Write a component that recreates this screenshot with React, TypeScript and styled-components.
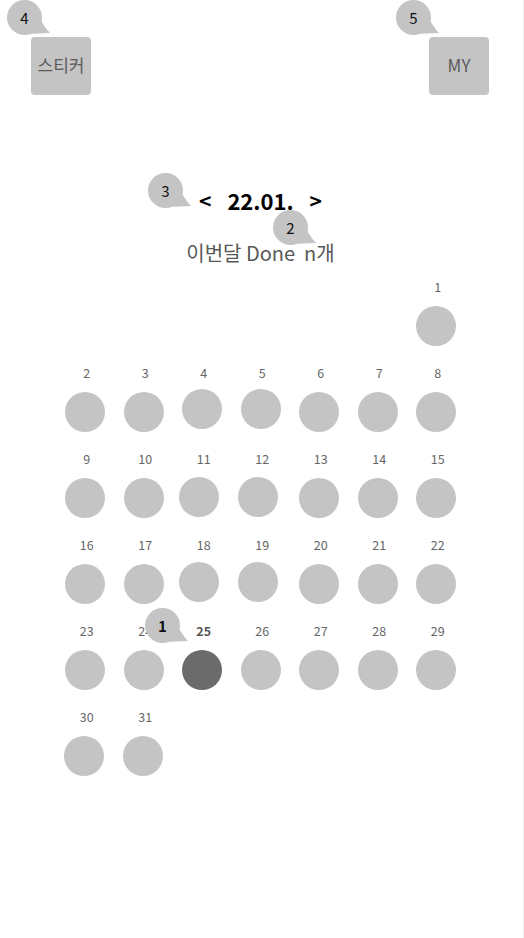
import styled, { createGlobalStyle } from "styled-components";

const GlobalStyle = createGlobalStyle`
    html, body {
        margin: 0;
        padding: 0;
        background: #fff;
    }
    body {
        font-family: "Noto Sans CJK KR", "Noto Sans", sans-serif;
    }
`;

type Day = { n: number; dx?: number; dy?: number };

// first of the month falls on the last column
const weeks: (Day | null)[][] = [
    [null, null, null, null, null, null, { n: 1 }],
    [{ n: 2 }, { n: 3 }, { n: 4, dy: -3 }, { n: 5, dy: -3 }, { n: 6 }, { n: 7 }, { n: 8 }],
    [{ n: 9 }, { n: 10 }, { n: 11, dx: -3, dy: -1 }, { n: 12, dx: -3, dy: -1 }, { n: 13 }, { n: 14 }, { n: 15 }],
    [{ n: 16 }, { n: 17 }, { n: 18, dx: -3, dy: -2 }, { n: 19, dx: -3, dy: -2 }, { n: 20 }, { n: 21 }, { n: 22 }],
    [{ n: 23 }, { n: 24 }, { n: 25 }, { n: 26 }, { n: 27 }, { n: 28 }, { n: 29 }],
    [{ n: 30, dx: -1 }, { n: 31, dx: -1 }],
];

const TODAY = 25;

const notes = [
    { label: "1", x: 145, y: 608, bold: true },
    { label: "2", x: 273, y: 210 },
    { label: "3", x: 148, y: 173 },
    { label: "4", x: 7, y: 0 },
    { label: "5", x: 396, y: 0 },
];

const Bubble = ({ label, x, y, bold }: { label: string; x: number; y: number; bold?: boolean }) => (
    <Note style={{ left: x, top: y }}>
        <svg width="52" height="38" viewBox="0 0 52 38">
            <circle cx="17.5" cy="17.5" r="17.5" fill="#c4c4c4" />
            <path d="M30 12 Q36 26 43 33 L18 34 Z" fill="#c4c4c4" />
        </svg>
        <NoteText $bold={bold}>{label}</NoteText>
    </Note>
);

const App = () => {
    return (
        <Page>
            <GlobalStyle />
            <Header>
                <SquareButton>스티커</SquareButton>
                <SquareButton>MY</SquareButton>
            </Header>

            <MonthNav>
                <Arrow>&lt;</Arrow>
                <Month>22.01.</Month>
                <Arrow>&gt;</Arrow>
            </MonthNav>
            <Summary>이번달 Done&nbsp; n개</Summary>

            <Calendar>
                {weeks.map((week, wi) =>
                    Array.from({ length: 7 }).map((_, di) => {
                        const d = week[di];
                        if (!d) return <Cell key={`${wi}-${di}`} />;
                        const today = d.n === TODAY;
                        return (
                            <Cell key={`${wi}-${di}`}>
                                <DayNum $today={today}>{d.n}</DayNum>
                                <Dot
                                    $today={today}
                                    style={{ transform: `translate(${d.dx ?? 0}px, ${d.dy ?? 0}px)` }}
                                />
                            </Cell>
                        );
                    })
                )}
            </Calendar>

            {notes.map((b) => (
                <Bubble key={b.label} {...b} />
            ))}
        </Page>
    );
};

export default App;


const Page = styled.div`
    position: relative;
    width: 524px;
    min-height: 938px;
    box-sizing: border-box;
    border-right: 1px solid #f2f2f2;
`;

const Header = styled.header`
    display: flex;
    justify-content: space-between;
    padding: 37px 34px 0 31px;
`;

const SquareButton = styled.button`
    width: 60px;
    height: 58px;
    border: none;
    border-radius: 4px;
    background-color: #c4c4c4;
    color: #5a5a5a;
    font-family: "Noto Sans CJK KR", "Noto Sans", sans-serif;
    font-size: 17px;
    padding: 0 0 3px;
    display: flex;
    align-items: center;
    justify-content: center;
`;

const MonthNav = styled.div`
    display: flex;
    justify-content: center;
    align-items: center;
    gap: 16px;
    margin-top: 90px;
    margin-right: 2px;
    height: 30px;
    font-family: "Noto Sans CJK KR", "Noto Sans", sans-serif;
    font-weight: 700;
    color: #000;
`;

const Arrow = styled.span`
    font-size: 21px;
    line-height: 30px;
`;

const Month = styled.span`
    font-size: 22px;
    line-height: 30px;
`;

const Summary = styled.div`
    margin-top: 24px;
    margin-right: 2px;
    height: 28px;
    line-height: 28px;
    text-align: center;
    font-size: 20px;
    color: #585858;
`;

const Calendar = styled.div`
    display: grid;
    grid-template-columns: repeat(7, 58.5px);
    row-gap: 18px;
    margin: 11px 0 0 56px;
`;

const Cell = styled.div`
    display: flex;
    flex-direction: column;
    align-items: center;
    gap: 10px;
    height: 68px;
`;

const DayNum = styled.span<{ $today?: boolean }>`
    height: 18px;
    line-height: 18px;
    padding-left: 3px;
    font-size: 12.5px;
    font-weight: ${(p) => (p.$today ? 700 : 400)};
    color: ${(p) => (p.$today ? "#555" : "#666")};
`;

const Dot = styled.div<{ $today?: boolean }>`
    width: 40px;
    height: 40px;
    border-radius: 50%;
    background-color: ${(p) => (p.$today ? "#6b6b6b" : "#c4c4c4")};
`;

const Note = styled.div`
    position: absolute;
    width: 52px;
    height: 38px;
    svg {
        display: block;
    }
`;

const NoteText = styled.span<{ $bold?: boolean }>`
    position: absolute;
    left: 0;
    top: 0;
    width: 35px;
    height: 35px;
    display: flex;
    align-items: center;
    justify-content: center;
    font-size: 15px;
    font-weight: ${(p) => (p.$bold ? 700 : 400)};
    color: #111;
`;
